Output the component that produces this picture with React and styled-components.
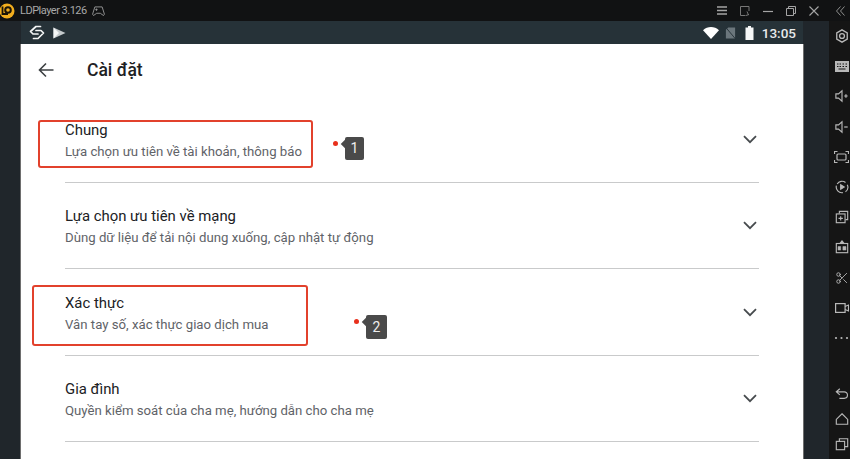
import React from 'react';
import styled, { createGlobalStyle } from 'styled-components';
import { Scissors } from 'lucide-react';

const rows = [
  { title: 'Chung', sub: 'Lựa chọn ưu tiên về tài khoản, thông báo', mark: { n: 1, left: -27, top: 24, w: 275, h: 48, tagLeft: 280, tagTop: 41, tagW: 19, tagH: 23 } },
  { title: 'Lựa chọn ưu tiên về mạng', sub: 'Dùng dữ liệu để tải nội dung xuống, cập nhật tự động' },
  { title: 'Xác thực', sub: 'Vân tay số, xác thực giao dịch mua', mark: { n: 2, left: -33, top: 17, w: 276, h: 61, tagLeft: 301, tagTop: 47, tagW: 21, tagH: 24 } },
  { title: 'Gia đình', sub: 'Quyền kiểm soát của cha mẹ, hướng dẫn cho cha mẹ' },
];

const Ico = ({ children, size = 14 }) => (
  <svg width={size} height={size} viewBox="0 0 16 16" fill="none" stroke="currentColor" strokeWidth="1.3">
    {children}
  </svg>
);

const App = () => (
  <Page>
    <Global />
    <TitleBar>
      <Brand>
        <svg width="16" height="16" viewBox="0 0 16 16">
          <circle cx="8" cy="8" r="7.5" fill="#f2ae1e" />
          <circle cx="9" cy="7" r="2.800" fill="none" stroke="#1a1408" strokeWidth="2" />
          <path d="M3.500 3.500v7.500h5.500" fill="none" stroke="#1a1408" strokeWidth="1.800" />
        </svg>
        <BrandName>LDPlayer 3.126</BrandName>
        <svg width="13" height="10" viewBox="0 0 14 11" fill="none" stroke="#9a9a9a" strokeWidth="1">
          <path d="M3 1h8l2.500 8-1 1.500L9 8H5l-3.500 2.500-1-1.500z" />
          <path d="M3.500 4h2.500M4.750 2.800v2.500" />
        </svg>
      </Brand>
      <WindowControls>
        <svg width="10" height="9" viewBox="0 0 10 9" stroke="#a5a5a5" strokeWidth="1.400">
          <path d="M0 1h10M0 4.500h10M0 8h10" />
        </svg>
        <svg width="10" height="10" viewBox="0 0 10 10" fill="none" stroke="#777" strokeWidth="1">
          <path d="M5.500 9.500H.5v-9h8.500V5" />
          <path d="M7 5.500l1.500 3.500M6 9.500l3-1" />
        </svg>
        <svg width="10" height="10" viewBox="0 0 10 10" stroke="#a5a5a5" strokeWidth="1.200">
          <path d="M0 5.500h10" />
        </svg>
        <svg width="10" height="10" viewBox="0 0 10 10" fill="none" stroke="#a5a5a5" strokeWidth="1">
          <path d="M.5 2.500h7v7h-7z" />
          <path d="M2.500 2.500v-2h7v7h-2" />
        </svg>
        <svg width="10" height="10" viewBox="0 0 10 10" stroke="#a5a5a5" strokeWidth="1.100">
          <path d="M.5.5l9 9M9.500.5l-9 9" />
        </svg>
        <CollapseGap>
          <svg width="9" height="10" viewBox="0 0 9 10" fill="none" stroke="#8d8d8d" strokeWidth="1">
            <path d="M4.500 .5L.5 5l4 4.500M8.500 .5L4.500 5l4 4.500" />
          </svg>
        </CollapseGap>
      </WindowControls>
    </TitleBar>

    <Body>
      <LeftGutter />
      <Screen>
        <StatusBar>
          <StatusGroup>
            <svg width="16" height="15" viewBox="0 0 16 15" fill="none" stroke="#f2f4f4" strokeWidth="1.700" strokeLinejoin="round" strokeLinecap="round">
              <path d="M11.500 1.500H7L1.500 6.500 4 9h5" />
              <path d="M7 5.500h5l2.500 2.500-5.500 5.500H4.500" />
            </svg>
            <svg width="13" height="12" viewBox="0 0 13 12">
              <path d="M.5.500l12 5.500-12 5.500z" fill="#c4cacc" />
              <path d="M.5.500l5.500 5.500-5.500 5.500z" fill="#f4f6f6" />
            </svg>
          </StatusGroup>
          <StatusGroup>
            <svg width="16" height="12" viewBox="0 0 16 12">
              <path d="M0 3.200C4.500-1 11.500-1 16 3.200L8 12z" fill="#fff" />
            </svg>
            <SimGap>
              <svg width="11" height="12" viewBox="0 0 11 13">
                <path d="M3 .5h7.500v12H.5V3z" fill="#6b767c" />
                <path d="M0 0l11 13" stroke="#263238" strokeWidth="1" />
              </svg>
            </SimGap>
            <BatteryGap>
              <svg width="9" height="14" viewBox="0 0 9 14">
                <path d="M3 0h3v1.500h2.500V14H.5V1.500H3z" fill="#f5f7f7" />
              </svg>
            </BatteryGap>
            <Clock>13:05</Clock>
          </StatusGroup>
        </StatusBar>

        <Content>
          <Header>
            <svg width="16" height="16" viewBox="0 0 16 16" fill="none" stroke="#3c4043" strokeWidth="1.600">
              <path d="M15.500 8H1.500M8 1.500L1.500 8 8 14.500" />
            </svg>
            <Heading>Cài đặt</Heading>
          </Header>
          <List>
            {rows.map((r) => (
              <Row key={r.title}>
                <RowText>
                  <RowTitle>{r.title}</RowTitle>
                  <RowSub>{r.sub}</RowSub>
                </RowText>
                <svg width="14" height="9" viewBox="0 0 14 9" fill="none" stroke="#474b4e" strokeWidth="1.800">
                  <path d="M1 1.200l6 6 6-6" />
                </svg>
                {r.mark && (
                  <>
                    <MarkBox $left={r.mark.left} $top={r.mark.top} $w={r.mark.w} $h={r.mark.h} />
                    <MarkDot $left={r.mark.tagLeft - 12} $top={r.mark.tagTop + 4} />
                    <MarkTag $left={r.mark.tagLeft} $top={r.mark.tagTop} $w={r.mark.tagW} $h={r.mark.tagH}>
                      {r.mark.n}
                    </MarkTag>
                  </>
                )}
              </Row>
            ))}
          </List>
        </Content>
      </Screen>
      <RightGutter />
      <SideBar>
        <SideTop>
          <SideItem>
            <Ico>
              <path d="M8 1l6 3.500v7L8 15l-6-3.500v-7z" strokeWidth="1.500" />
              <circle cx="8" cy="8" r="2.800" strokeWidth="1.500" />
            </Ico>
          </SideItem>
          <SideItem>
            <svg width="14" height="11" viewBox="0 0 14 11">
              <rect width="14" height="11" fill="#b8b8b8" />
              <path d="M2 3h1.500M4.500 3H6M7.500 3H9M10.500 3H12M2 5.500h1.500M4.500 5.500H6M7.500 5.500H9M10.500 5.500H12M3.500 8h7" stroke="#151515" strokeWidth="1" />
            </svg>
          </SideItem>
          <SideItem>
            <Ico>
              <path d="M1 5.500h3l4-3.500v12l-4-3.500H1z" />
              <path d="M10.500 8h4M12.500 6v4" strokeWidth="1.400" />
            </Ico>
          </SideItem>
          <SideItem>
            <Ico>
              <path d="M1 5.500h3l4-3.500v12l-4-3.500H1z" />
              <path d="M10.500 8h4" strokeWidth="1.400" />
            </Ico>
          </SideItem>
          <SideItem>
            <svg width="15" height="12" viewBox="0 0 15 12" fill="none" stroke="currentColor" strokeWidth="1.200">
              <path d="M.5 3V.5h3M11.500.5h3V3M14.500 9v2.500h-3M3.500 11.500h-3V9" />
              <rect x="3" y="3" width="9" height="6" rx="1" />
            </svg>
          </SideItem>
          <SideItem>
            <Ico>
              <path d="M2.500 4.500A6.500 6.500 0 0 1 12 2.800M14 5.500a6.500 6.500 0 0 1-2 8M9 14.400a6.500 6.500 0 0 1-7.400-8" />
              <path d="M6.500 5.500l4 2.500-4 2.500z" fill="currentColor" />
            </Ico>
          </SideItem>
          <SideItem>
            <Ico>
              <path d="M5 4V1.500h9.500V11H12" />
              <rect x="1.500" y="4.500" width="10" height="10" />
              <path d="M6.500 7v5M4 9.500h5" />
            </Ico>
          </SideItem>
          <SideItem>
            <Ico>
              <rect x="1.500" y="4" width="13" height="10.500" />
              <path d="M5.500 4L8 1l2.500 3M8 1v3" />
              <path d="M3.500 7.500h3v4h-3zM9 7.500h3.500v4H9z" fill="currentColor" strokeWidth=".6" />
            </Ico>
          </SideItem>
          <SideItem><Scissors size={14} strokeWidth={1.500} /></SideItem>
          <SideItem>
            <svg width="14" height="10" viewBox="0 0 14 10" fill="none" stroke="currentColor" strokeWidth="1.200">
              <rect x=".6" y=".6" width="9.500" height="8.800" />
              <path d="M10 3.500l3.500-1.500v6L10 6.500" />
            </svg>
          </SideItem>
          <SideItem>
            <svg width="15" height="4" viewBox="0 0 15 4" fill="#b8b8b8">
              <circle cx="2" cy="2" r="1.100" />
              <circle cx="7.500" cy="2" r="1.100" />
              <circle cx="13" cy="2" r="1.100" />
            </svg>
          </SideItem>
        </SideTop>
        <SideBottom>
          <SideNav>
            <Ico>
              <path d="M5.500 2L1.500 5.500l4 3.500M2 5.500h8.500a3.500 3.500 0 0 1 0 7.500H5" />
            </Ico>
          </SideNav>
          <SideNav>
            <Ico>
              <path d="M8 2l6.500 6.500V14h-13V8.500z" />
            </Ico>
          </SideNav>
          <SideNav>
            <Ico>
              <rect x="1.500" y="5" width="9.500" height="9.500" />
              <path d="M5 5V2h9.500v9H11" />
            </Ico>
          </SideNav>
        </SideBottom>
      </SideBar>
    </Body>
  </Page>
);

export default App;

const Global = createGlobalStyle`
  html, body {
    margin: 0;
    padding: 0;
    background: #151515;
    overflow: hidden;
  }
  svg {
    display: block;
    flex-shrink: 0;
  }
`;

const Page = styled.div`
  width: 850px;
  height: 459px;
  display: flex;
  flex-direction: column;
  font-family: Roboto, "Liberation Sans", sans-serif;
  overflow: hidden;
`;

const TitleBar = styled.div`
  height: 21px;
  flex-shrink: 0;
  display: flex;
  align-items: center;
  justify-content: space-between;
  background: #111213;
`;

const Brand = styled.div`
  display: flex;
  align-items: center;
  gap: 5px;
  margin-left: -1px;
`;

const BrandName = styled.span`
  font-size: 11px;
  letter-spacing: -0.5px;
  color: #a8a8a8;
`;

const WindowControls = styled.div`
  display: flex;
  align-items: center;
  gap: 13px;
  padding-right: 5px;
`;

const CollapseGap = styled.div`
  margin-left: 4px;
`;

const Body = styled.div`
  flex: 1;
  display: flex;
  min-height: 0;
`;

const LeftGutter = styled.div`
  width: 21px;
  flex-shrink: 0;
  background: #20262b;
`;

const Screen = styled.div`
  width: 782px;
  flex-shrink: 0;
  display: flex;
  flex-direction: column;
`;

const StatusBar = styled.div`
  height: 23px;
  flex-shrink: 0;
  display: flex;
  align-items: center;
  justify-content: space-between;
  padding: 0 7px 0 8px;
  background: #263238;
`;

const StatusGroup = styled.div`
  display: flex;
  align-items: center;
  gap: 8px;
`;

const SimGap = styled.div`
  margin-left: -2px;
`;

const BatteryGap = styled.div`
  margin-left: 1px;
`;

const Clock = styled.span`
  font-size: 13.500px;
  font-weight: 500;
  color: #e8eaeb;
`;

const Content = styled.div`
  position: relative;
  flex: 1;
  background: #fff;
  box-shadow: -1px 0 0 #6e6e6e, 1px 0 0 #6e6e6e;
`;

const Header = styled.div`
  height: 52.600px;
  box-sizing: border-box;
  padding: 0 0 1px 17px;
  display: flex;
  align-items: center;
  gap: 33px;
`;

const Heading = styled.h1`
  margin: 0;
  font-size: 17.500px;
  font-weight: 500;
  color: #202124;
`;

const List = styled.div`
  padding: 0 44px;
`;

const Row = styled.div`
  position: relative;
  height: 86.400px;
  box-sizing: border-box;
  display: flex;
  align-items: center;
  justify-content: space-between;
  border-bottom: 1.400px solid #c9cacb;
  padding-right: 2px;
`;

const RowText = styled.div`
  padding-top: 2px;
`;

const RowTitle = styled.div`
  font-size: 14.900px;
  line-height: 20px;
  color: #202124;
  margin-bottom: 2px;
`;

const RowSub = styled.div`
  font-size: 13.200px;
  line-height: 19px;
  color: #5f6368;
`;

const MarkBox = styled.div`
  position: absolute;
  left: ${(p) => p.$left}px;
  top: ${(p) => p.$top - 1}px;
  width: ${(p) => p.$w}px;
  height: ${(p) => p.$h}px;
  box-sizing: border-box;
  border: 2px solid #e2412c;
  border-radius: 3px;
`;

const MarkDot = styled.div`
  position: absolute;
  left: ${(p) => p.$left}px;
  top: ${(p) => p.$top - 1}px;
  width: 5px;
  height: 5px;
  border-radius: 50%;
  background: #e8301c;
`;

const MarkTag = styled.div`
  position: absolute;
  left: ${(p) => p.$left}px;
  top: ${(p) => p.$top - 1}px;
  width: ${(p) => p.$w}px;
  height: ${(p) => p.$h}px;
  display: flex;
  align-items: center;
  justify-content: center;
  background: #4a4a4a;
  border-radius: 2px;
  color: #eee;
  font-size: 14px;

  &::before {
    content: '';
    position: absolute;
    left: -3px;
    top: 4px;
    width: 6px;
    height: 6px;
    background: #4a4a4a;
    transform: rotate(45deg);
  }
`;

const RightGutter = styled.div`
  width: 26px;
  flex-shrink: 0;
  background: #20262b;
`;

const SideBar = styled.div`
  width: 21px;
  flex-shrink: 0;
  background: #151515;
  display: flex;
  flex-direction: column;
  color: #b8b8b8;
`;

const SideTop = styled.div`
  display: flex;
  flex-direction: column;
`;

const SideItem = styled.div`
  height: 30.200px;
  display: flex;
  align-items: center;
  justify-content: center;
  padding-left: 4px;
`;

const SideBottom = styled.div`
  margin-top: auto;
  display: flex;
  flex-direction: column;
  padding-bottom: 3px;
`;

const SideNav = styled.div`
  height: 25px;
  display: flex;
  align-items: center;
  justify-content: center;
  padding-left: 4px;
`;
